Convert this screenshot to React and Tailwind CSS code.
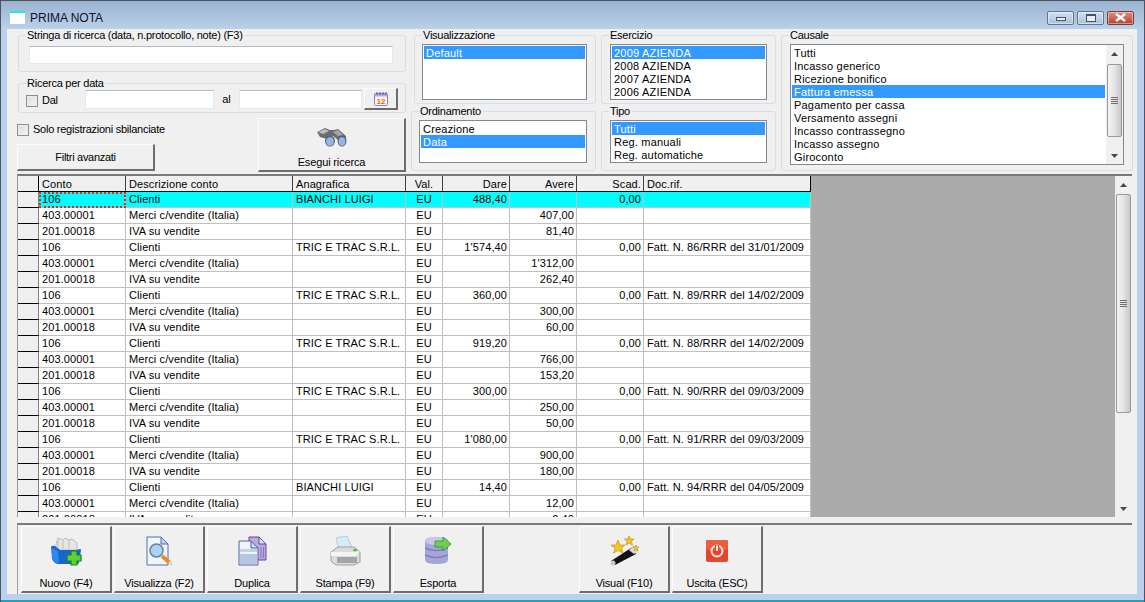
import React from 'react';

const FONT = "font-['Liberation_Sans',Arial,sans-serif]";

const COLS = [
  { label: 'Conto', w: 'w-[87px]', cls: 'text-left pl-[3px]' },
  { label: 'Descrizione conto', w: 'w-[167px]', cls: 'text-left pl-[3px]' },
  { label: 'Anagrafica', w: 'w-[113px]', cls: 'text-left pl-[3px]' },
  { label: 'Val.', w: 'w-[37px]', cls: 'text-center' },
  { label: 'Dare', w: 'w-[67px]', cls: 'text-right pr-[2px]' },
  { label: 'Avere', w: 'w-[67px]', cls: 'text-right pr-[2px]' },
  { label: 'Scad.', w: 'w-[67px]', cls: 'text-right pr-[2px]' },
  { label: 'Doc.rif.', w: 'w-[167px]', cls: 'text-left pl-[3px]' },
];

// three rows for every registration: client, sales, VAT
const entry = (name, total, net, vat, doc) => [
  ['106', 'Clienti', name, 'EU', total, '', '0,00', doc],
  ['403.00001', 'Merci c/vendite (Italia)', '', 'EU', '', net, '', ''],
  ['201.00018', 'IVA su vendite', '', 'EU', '', vat, '', ''],
];

const ROWS = [
  ...entry('BIANCHI LUIGI', '488,40', '407,00', '81,40', ''),
  ...entry('TRIC E TRAC S.R.L.', '1\'574,40', '1\'312,00', '262,40', 'Fatt. N. 86/RRR del 31/01/2009'),
  ...entry('TRIC E TRAC S.R.L.', '360,00', '300,00', '60,00', 'Fatt. N. 89/RRR del 14/02/2009'),
  ...entry('TRIC E TRAC S.R.L.', '919,20', '766,00', '153,20', 'Fatt. N. 88/RRR del 14/02/2009'),
  ...entry('TRIC E TRAC S.R.L.', '300,00', '250,00', '50,00', 'Fatt. N. 90/RRR del 09/03/2009'),
  ...entry('TRIC E TRAC S.R.L.', '1\'080,00', '900,00', '180,00', 'Fatt. N. 91/RRR del 09/03/2009'),
  ...entry('BIANCHI LUIGI', '14,40', '12,00', '2,40', 'Fatt. N. 94/RRR del 04/05/2009'),
];

function Group({ title, className, inner, children }) {
  return (
    <fieldset className={`border border-[#d5dfe5] rounded-[3px] min-w-0 ${className}`}>
      <legend className="ml-[7px] px-[1px] text-[11px] tracking-[-0.25px] leading-[13px] h-[13px]">{title}</legend>
      <div className={inner}>{children}</div>
    </fieldset>
  );
}

function ListBox({ items, selected, className }) {
  return (
    <div className={`border border-[#828790] bg-white pt-[1px] px-[1px] overflow-hidden ${className}`}>
      {items.map((item) => (
        <div
          key={item}
          className={`h-[13px] leading-[15px] pl-[2px] text-[11px] tracking-[0.2px] whitespace-nowrap ${item === selected ? 'bg-[#3399ff] text-white' : 'text-black'}`}
        >
          {item}
        </div>
      ))}
    </div>
  );
}

function TextInput({ className }) {
  return <div className={`bg-white border-t border-[#b5bcc4] border-x border-x-[#e3e9ef] border-b border-b-[#e3e9ef] ${className}`} />;
}

function Check({ label, className }) {
  return (
    <div className={`flex items-center gap-[4px] text-[11px] leading-[13px] tracking-[-0.25px] ${className}`}>
      <span className="block w-[12px] h-[12px] border border-[#8e8f8f] bg-gradient-to-br from-[#dcdcdc] to-[#f4f4f4] shadow-[inset_0_0_0_1px_#ececec]" />
      <span>{label}</span>
    </div>
  );
}

function Raised({ className, children }) {
  return (
    <div className={`bg-[#f0f0f0] border-t border-l border-[#fcfcfc] border-r-2 border-b-2 border-r-[#6d6d6d] border-b-[#6d6d6d] ${className}`}>
      {children}
    </div>
  );
}

function ToolButton({ label, icon, className = '' }) {
  return (
    <Raised className={`w-[91px] h-[67px] flex flex-col items-center text-[11px] tracking-[-0.2px] text-black ${className}`}>
      <div className="h-[43px] flex items-center justify-center mt-[2px]">{icon}</div>
      <div className="leading-[13px] mt-[5px]">{label}</div>
    </Raised>
  );
}

function ScrollBar({ height, thumbTop, thumbH }) {
  return (
    <div className={`w-[17px] flex flex-col items-center bg-[#f0f0f0] ${height}`}>
      <svg width="9" height="17" viewBox="0 0 9 17" className="shrink-0"><path d="M1 11 L4.5 7 L8 11 Z" fill="#3c4a56" /></svg>
      <div className={`w-[15px] ${thumbTop}`} />
      <div className={`w-[15px] ${thumbH} border border-[#97999c] rounded-[2px] bg-gradient-to-r from-[#f4f4f4] via-[#e4e4e4] to-[#c8c8c8] flex flex-col items-center justify-center gap-[1px]`}>
        <span className="block w-[7px] h-[1px] bg-[#6f6f6f]" />
        <span className="block w-[7px] h-[1px] bg-[#6f6f6f]" />
        <span className="block w-[7px] h-[1px] bg-[#6f6f6f]" />
        <span className="block w-[7px] h-[1px] bg-[#6f6f6f]" />
      </div>
      <div className="flex-1" />
      <svg width="9" height="14" viewBox="0 0 9 14" className="shrink-0"><path d="M1 4 L8 4 L4.5 8 Z" fill="#3c4a56" /></svg>
    </div>
  );
}

const Binoculars = () => (
  <svg width="31" height="20" viewBox="0 0 31 20">
    <path d="M1 5 L9 1 L14 3 L18 3 L22 2 L30 9 L30 14 L22 13 L17 9 L14 9 L11 12 L4 10 Z" fill="#6a6d71" />
    <path d="M2 5 L9 2 L13 4 L7 7 Z" fill="#b9bdc2" />
    <path d="M17 5 L22 3 L27 8 L22 9 Z" fill="#a2a6ac" />
    <ellipse cx="14" cy="14" rx="5" ry="5.5" fill="#5d6063" />
    <ellipse cx="14" cy="14.5" rx="3.8" ry="4.2" fill="#8fb8e8" />
    <ellipse cx="26" cy="14" rx="4.5" ry="5.5" fill="#5d6063" />
    <ellipse cx="26" cy="14.5" rx="3.4" ry="4.2" fill="#8fb8e8" />
  </svg>
);

const CalendarIcon = () => (
  <svg width="16" height="16" viewBox="0 0 16 16">
    <rect x="1.5" y="2.5" width="13" height="12" rx="1" fill="#fbf6ea" stroke="#8d7fb5" />
    <rect x="2" y="3" width="12" height="2.5" fill="#b8a9dc" />
    <path d="M4 1v3M7 1v3M10 1v3M13 1v3" stroke="#6c5d96" />
    <text x="8" y="12.5" textAnchor="middle" fontSize="8" fontWeight="700" fill="#f0641e" fontFamily="Liberation Sans">12</text>
  </svg>
);

const NewIcon = () => (
  <svg width="32" height="30" viewBox="0 0 32 30">
    <path d="M6 8 L8 2 L13 4 L15 2 L19 4 L22 3 L27 7 L27 14 L6 14 Z" fill="#e6e6e6" stroke="#a8a8a8" strokeWidth="0.7" />
    <path d="M8 4 L8 13 M13 4 L13 13 M19 4 L19 13" stroke="#bdbdbd" />
    <path d="M1 11 Q2 9 5 10 L10 14 L27 14 Q31 12 31 14 L29 26 Q29 28 26 28 L8 28 Q3 27 2 22 Z" fill="#1467cf" />
    <path d="M2 12 L8 15 L9 27 Q3 26 2 21 Z" fill="#2b8aec" />
    <path d="M17 19 L21 19 L21 15 L27 15 L27 19 L31 19 L31 25 L27 25 L27 29 L21 29 L21 25 L17 25 Z" fill="#5fd03a" stroke="#1c7f1f" strokeWidth="1.2" />
  </svg>
);

const ViewIcon = () => (
  <svg width="29" height="30" viewBox="0 0 29 30">
    <path d="M2 1 L16 1 L23 8 L23 29 L2 29 Z" fill="#eef5fd" stroke="#5670a8" />
    <path d="M16 1 L16 8 L23 8 Z" fill="#bcd2ee" stroke="#5670a8" />
    <path d="M17 20 L25 27" stroke="#f08a24" strokeWidth="4" />
    <path d="M24 26 L27 29" stroke="#d8d8d8" strokeWidth="2.5" />
    <circle cx="11.5" cy="14.5" r="6.5" fill="#a9d3f3" stroke="#6f8196" strokeWidth="1.5" />
  </svg>
);

const DuplicateIcon = () => (
  <svg width="29" height="30" viewBox="0 0 29 30">
    <path d="M11 1 L21 1 L28 8 L28 24 L11 24 Z" fill="#bca8de" stroke="#5e4b99" />
    <path d="M21 1 L21 8 L28 8 Z" fill="#e5dcf5" stroke="#5e4b99" />
    <path d="M23 11 v11 M25.5 11 v11" stroke="#8a75bd" />
    <path d="M1 5 L13 5 L20 12 L20 29 L1 29 Z" fill="#f0f4fb" stroke="#4a66a5" />
    <path d="M13 5 L13 12 L20 12 Z" fill="#c9d9f0" stroke="#4a66a5" />
    <rect x="2" y="13" width="17" height="3" fill="#c3d0e8" />
    <rect x="2" y="18" width="17" height="10" fill="#b8c5e2" />
  </svg>
);

const PrintIcon = () => (
  <svg width="31" height="30" viewBox="0 0 31 30">
    <path d="M6 2 L17 0 L22 12 L9 14 Z" fill="#d4ecfb" stroke="#a6bccb" strokeWidth="0.7" />
    <path d="M1 16 L8 11 L24 11 L30 16 L30 26 L24 29 L6 29 L1 25 Z" fill="#dcdcdc" stroke="#8d8d8d" strokeWidth="0.8" />
    <path d="M1 16 L26 16 L30 15 L26 20 L1 20 Z" fill="#f4f4f4" />
    <path d="M7 22 L27 22 M7 24 L27 24 M7 26 L27 26" stroke="#6e6e6e" />
    <ellipse cx="25" cy="14" rx="2" ry="1.2" fill="#4dbb3c" />
  </svg>
);

const ExportIcon = () => (
  <svg width="28" height="29" viewBox="0 0 28 29">
    <path d="M1 5 Q1 1 12.5 1 Q24 1 24 5 L24 24 Q24 28 12.5 28 Q1 28 1 24 Z" fill="#a3a6d8" />
    <ellipse cx="12.5" cy="5" rx="11.5" ry="4" fill="#c5c8ea" />
    <path d="M1 12 Q12 17 24 12 M1 19 Q12 24 24 19" stroke="#7376ad" fill="none" strokeWidth="1.2" />
    <path d="M11 5 L19 5 L19 1 L27 8 L19 15 L19 11 L11 11 Z" fill="#6fd14a" stroke="#2e8f2e" strokeWidth="0.8" />
  </svg>
);

const WandIcon = () => (
  <svg width="31" height="30" viewBox="0 0 31 30">
    <path d="M2 25 L22 12 L27 18 L6 29 Z" fill="#111" />
    <path d="M20 14 L25 10 L29 14 L25 18 Z" fill="#dcdcdc" stroke="#9a9a9a" strokeWidth="0.5" />
    <circle cx="4" cy="27" r="2.5" fill="#c8c8c8" />
    <path d="M9 4 L11 9 L16 9 L12.5 12.5 L14 17 L9 14.5 L4.5 17 L6 12.5 L2 9 L7 9 Z" fill="#f5c518" stroke="#b98a10" strokeWidth="0.6" />
    <path d="M20 0 L21.5 3 L25 3 L22.5 5.5 L23.5 9 L20 7 L17 9 L18 5.5 L15.5 3 L19 3 Z" fill="#f5c518" stroke="#b98a10" strokeWidth="0.6" />
    <path d="M27 9 L28 11 L30 11 L28.5 12.5 L29 15 L27 13.5 L25 15 L25.5 12.5 L24 11 L26 11 Z" fill="#f5c518" stroke="#b98a10" strokeWidth="0.5" />
  </svg>
);

const ExitIcon = () => (
  <svg width="24" height="24" viewBox="0 0 24 24">
    <rect x="1" y="1" width="22" height="22" rx="2" fill="#e5452a" />
    <rect x="1" y="1" width="22" height="10" rx="2" fill="#ec5c3f" />
    <circle cx="12" cy="12" r="5.5" fill="none" stroke="#fbe3dc" strokeWidth="2" />
    <path d="M12 6 V12" stroke="#e5452a" strokeWidth="4" />
    <path d="M12 6.5 V12" stroke="#fbe3dc" strokeWidth="2" />
  </svg>
);

function CaptionButton({ className, children }) {
  return (
    <div className={`h-[14px] border border-[#5f7590] rounded-[2px] flex items-center justify-center shadow-[inset_0_0_0_1px_rgba(255,255,255,0.45)] ${className}`}>
      {children}
    </div>
  );
}

export default function App() {
  return (
    <div className={`${FONT} w-[1145px] h-[602px] flex flex-col overflow-hidden bg-[#b9d1ea] border-t border-x border-[#4a5560] text-black`}>
      {/* title bar */}
      <div className="h-[28px] shrink-0 flex items-center bg-gradient-to-b from-[#9cb3d0] to-[#b9d1ea] pl-[9px] pr-[9px] pt-[5px]">
        <span className="block w-[15px] h-[13px] bg-white border-t-2 border-[#22e6ee]" />
        <span className="ml-[5px] text-[12px] text-[#10102a]">PRIMA NOTA</span>
        <div className="ml-auto flex gap-[3px] mr-[1px]">
          <CaptionButton className="w-[27px] bg-gradient-to-b from-[#d3e1f0] to-[#a9c0da]">
            <span className="block w-[10px] h-[4px] mt-[3px] bg-[#e8eef5] border border-[#45566c]" />
          </CaptionButton>
          <CaptionButton className="w-[27px] bg-gradient-to-b from-[#d3e1f0] to-[#a9c0da]">
            <span className="block w-[10px] h-[8px] bg-[#e8eef5] border border-[#45566c] border-t-2" />
          </CaptionButton>
          <CaptionButton className="w-[27px] bg-gradient-to-b from-[#df8b7d] to-[#b6402f] text-white border-[#7b3a33]">
            <svg width="13" height="9" viewBox="0 0 13 9"><path d="M2 1 L11 8 M11 1 L2 8" stroke="#fff" strokeWidth="2.4" /></svg>
          </CaptionButton>
        </div>
      </div>

      <div className="flex-1 min-h-0 flex pl-[6px] pr-[7px]">
        <div className="w-[1130px] h-[565px] bg-[#f0f0f0] flex flex-col">
          {/* filter panel */}
          <div className="h-[145px] shrink-0 flex">
            <div className="w-[388px] ml-[11px] shrink-0">
              <Group title="Stringa di ricerca (data, n.protocollo, note) (F3)" className="h-[43px]" inner="px-[10px]">
                <TextInput className="w-[364px] h-[18px] mt-[4px]" />
              </Group>
              <Group title="Ricerca per data" className="h-[36px] mt-[5px]" inner="px-[7px]">
                <div className="flex items-start">
                  <Check label="Dal" className="w-[59px] mt-[4px]" />
                  <TextInput className="w-[129px] h-[19px]" />
                  <span className="text-[11px] leading-[13px] w-[26px] text-center mt-[3px]">al</span>
                  <TextInput className="w-[123px] h-[19px]" />
                  <Raised className="w-[34px] h-[22px] -mt-[2px] ml-[2px] flex items-center justify-center"><CalendarIcon /></Raised>
                </div>
              </Group>
              <div className="flex -ml-[1px] mt-[5px]">
                <div className="w-[241px]">
                  <Check label="Solo registrazioni sbilanciate" className="mt-[5px]" />
                  <Raised className="w-[138px] h-[27px] mt-[8px] flex items-center justify-center text-[11px] tracking-[-0.3px]">Filtri avanzati</Raised>
                </div>
                <Raised className="w-[148px] h-[54px] flex flex-col items-center text-[11px] tracking-[-0.15px]">
                  <div className="mt-[8px] leading-[0]"><Binoculars /></div>
                  <div className="mt-[7px] leading-[16px]">Esegui ricerca</div>
                </Raised>
              </div>
            </div>

            <div className="w-[185px] ml-[5px] shrink-0 flex flex-col items-end">
              <Group title="Visualizzazione" className="w-[182px] h-[75px]" inner="px-[7px]">
                <ListBox items={['Default']} selected="Default" className="w-[165px] h-[56px] mt-[2px]" />
              </Group>
              <Group title="Ordinamento" className="w-[185px] h-[66px] mt-[1px]" inner="px-[7px]">
                <ListBox items={['Creazione', 'Data']} selected="Data" className="w-[168px] h-[43px] mt-[2px]" />
              </Group>
            </div>

            <div className="w-[175px] ml-[5px] shrink-0">
              <Group title="Esercizio" className="h-[75px]" inner="px-[8px]">
                <ListBox items={['2009 AZIENDA', '2008 AZIENDA', '2007 AZIENDA', '2006 AZIENDA']} selected="2009 AZIENDA" className="w-[157px] h-[56px] mt-[2px]" />
              </Group>
              <Group title="Tipo" className="h-[66px] mt-[1px]" inner="px-[8px]">
                <ListBox items={['Tutti', 'Reg. manuali', 'Reg. automatiche']} selected="Tutti" className="w-[157px] h-[43px] mt-[2px]" />
              </Group>
            </div>

            <div className="w-[352px] ml-[5px] shrink-0">
              <Group title="Causale" className="h-[142px]" inner="px-[8px]">
                <div className="flex w-[334px] h-[121px] mt-[2px] border border-[#828790] bg-white">
                  <ListBox
                    items={['Tutti', 'Incasso generico', 'Ricezione bonifico', 'Fattura emessa', 'Pagamento per cassa', 'Versamento assegni', 'Incasso contrassegno', 'Incasso assegno', 'Giroconto']}
                    selected="Fattura emessa"
                    className="flex-1 border-0"
                  />
                  <ScrollBar height="h-[119px]" thumbTop="h-[2px]" thumbH="h-[73px]" />
                </div>
              </Group>
            </div>
          </div>

          {/* grid */}
          <div className="w-[1115px] ml-[10px] h-[343px] shrink-0 flex border-t-2 border-[#7a7a7a] border-l border-l-[#9a9a9a] overflow-hidden">
            <div className="w-[793px] h-[341px] shrink-0 overflow-hidden bg-white text-[11px]">
              <div className="flex h-[16px] bg-[#f0f0f0] border-b border-black">
                <div className="w-[21px] shrink-0 border-r border-black" />
                {COLS.map((c, i) => (
                  <div key={c.label} className={`${c.w} shrink-0 leading-[16px] tracking-[0.1px] border-r ${i === 7 ? 'border-black' : 'border-[#404040]'} ${c.cls}`}>{c.label}</div>
                ))}
              </div>
              {ROWS.map((row, r) => (
                <div key={r} className={`flex h-[16px] ${r === 0 ? 'bg-[#00ffff]' : 'bg-white'}`}>
                  <div className="w-[21px] shrink-0 bg-[#f0f0f0] border-r border-[#808080] border-b border-b-black" />
                  {COLS.map((c, i) => (
                    <div
                      key={c.label}
                      className={`${c.w} shrink-0 leading-[15px] tracking-[0.1px] border-r border-b border-[#c0c0c0] whitespace-nowrap overflow-hidden ${c.cls} ${r === 0 && i === 0 ? 'outline-2 -outline-offset-2 outline-dotted outline-[#e8261c]' : ''}`}
                    >
                      {row[i]}
                    </div>
                  ))}
                </div>
              ))}
            </div>
            <div className="w-[304px] h-[341px] shrink-0 bg-[#ababab]" />
            <ScrollBar height="h-[341px]" thumbTop="h-[1px]" thumbH="h-[219px]" />
          </div>

          {/* toolbar */}
          <div className="flex-1 min-h-0 border-t-2 mt-[6px] ml-[10px] w-[1115px] border-[#7a7a7a] border-l border-l-[#a0a0a0] flex items-start pt-[1px] pl-[3px] gap-[2px]">
            <ToolButton label="Nuovo (F4)" icon={<NewIcon />} />
            <ToolButton label="Visualizza (F2)" icon={<ViewIcon />} />
            <ToolButton label="Duplica" icon={<DuplicateIcon />} />
            <ToolButton label="Stampa (F9)" icon={<PrintIcon />} />
            <ToolButton label="Esporta" icon={<ExportIcon />} />
            <ToolButton label="Visual (F10)" icon={<WandIcon />} className="ml-[93px]" />
            <ToolButton label="Uscita (ESC)" icon={<ExitIcon />} />
          </div>
        </div>
      </div>

      <div className="h-[8px] shrink-0 border-b-2 border-b-[#1ba6b8] bg-[#b9d1ea]" />
    </div>
  );
}
